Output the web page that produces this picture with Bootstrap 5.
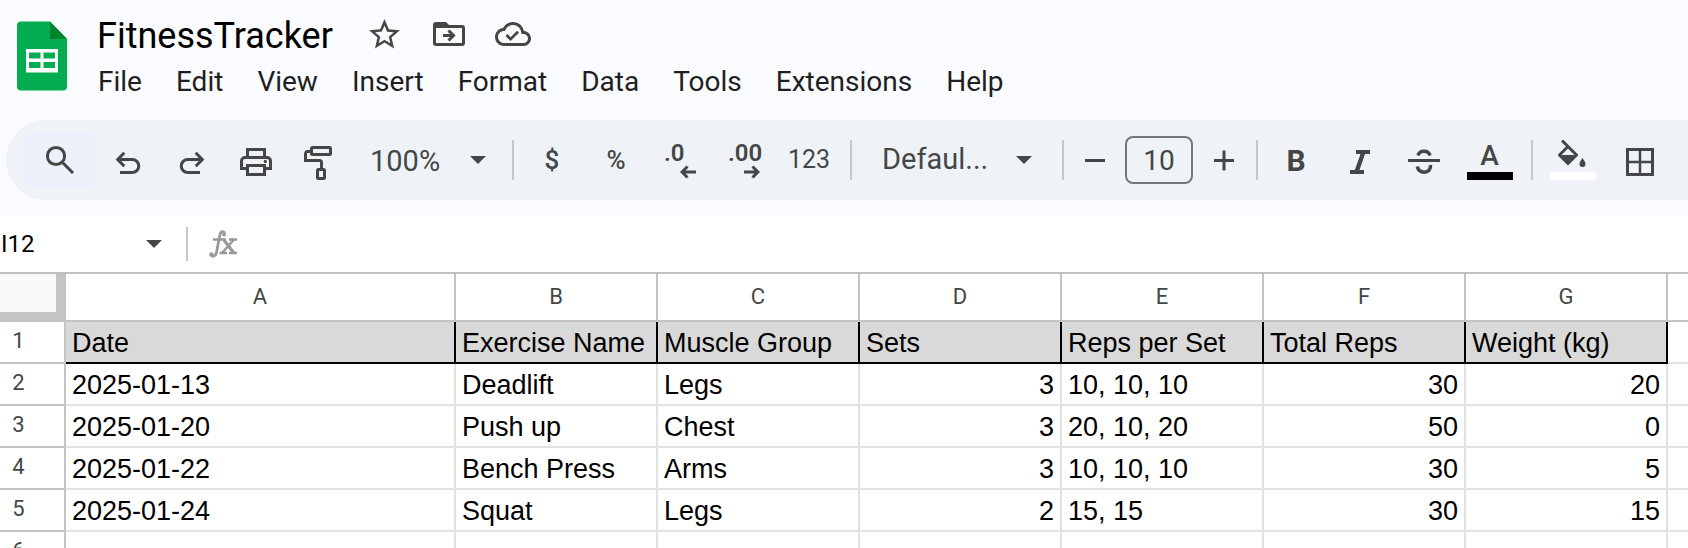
<!DOCTYPE html>
<html lang="en">
<head>
<meta charset="utf-8">
<meta name="viewport" content="width=device-width, initial-scale=1">
<title>FitnessTracker</title>
<link href="https://cdn.jsdelivr.net/npm/bootstrap@5.3.0/dist/css/bootstrap.min.css" rel="stylesheet">
<style>
  :root { --ink: #444746; --line: #c4c4c4; --cell-line: #e1e1e1; }
  body { background: #fafbfe; font-family: Roboto, "Liberation Sans", sans-serif; color: #1f1f1f; }
  button { border: 0; background: transparent; padding: 0; color: var(--ink); }
  svg { display: block; flex: none; }
  .ln { fill: none; stroke: currentColor; stroke-width: 3; }

  .app-head { height: 120px; padding: 12px 0 0 17px; gap: 30px; }
  .logo { margin-top: 9px; }
  .doc-row { height: 46px; }
  .doc-name { font-size: 36px; line-height: 44px; color: #000; margin: 0 20px 0 0; padding-top: 2px; font-weight: 400; }
  .doc-row button { width: 64px; height: 44px; }
  .menus { gap: 34px; padding: 5px 0 0 1px; }
  .menus a { font-size: 28px; line-height: 38px; color: #1f1f1f; text-decoration: none; }

  .toolbar { height: 80px; margin-left: 6px; padding-left: 18px; background: #eff3f8; border-radius: 40px 0 0 40px; overflow: hidden; }
  .tool { width: 64px; height: 56px; flex: none; display: flex; align-items: center; justify-content: center; font-size: 26px; line-height: 32px; }
  .tool.search { width: 72px; background: #edf0fa; border-radius: 8px; }
  .tool.wide { width: 67px; }
  .tool.step { width: 49px; }
  .tool.fmt { width: 66px; font-size: 25px; }
  .tool.strong { font-size: 30px; font-weight: 700; padding-top: 2px; }
  .rule { width: 2px; height: 40px; margin: 0 6px 0 8px; background: #c7c7c7; flex: none; }
  .pick { appearance: none; border: 0; border-radius: 0; height: 56px; flex: none; padding: 0 0 0 18px; font-size: 29px; color: var(--ink);
    background: transparent url("data:image/svg+xml,%3Csvg xmlns='http://www.w3.org/2000/svg' viewBox='0 0 16 8'%3E%3Cpath fill='%23444746' d='M0 0h16L8 8z'/%3E%3C/svg%3E") no-repeat right 18px center / 16px 8px; }
  .pick.zoom { width: 152px; padding-top: 3px; }
  .pick.font { width: 196px; padding-left: 24px; background-position: right 22px center; }
  .size { width: 68px; height: 48px; margin: 0 6px; border: 2px solid #747775; border-radius: 8px; background: transparent; text-align: center; font-size: 28px; color: var(--ink); padding: 0; flex: none; }
  .decimals { width: 32px; text-align: left; font-weight: 600; font-size: 24px; line-height: 24px; }
  .decimals svg { margin-left: auto; }
  .letter { font-size: 28px; line-height: 32px; font-weight: 500; }
  .swatch { width: 46px; height: 8px; background: #000; }

  .formula { height: 56px; margin-top: 16px; background: #fff; }
  .name-box { width: 130px; border: 0; padding: 0 0 0 1px; font-size: 24px; color: #000; background: transparent; }
  .formula button { width: 48px; height: 40px; }
  .formula .rule { height: 34px; }
  .fx { color: #999; margin-left: 15px; }
  .entry { border: 0; background: transparent; min-width: 0; font-size: 26px; }

  .sheet-wrap { background: #fff; overflow: hidden; min-height: 0; border-top: 2px solid #c0c0c0; }
  .sheet { width: 100%; table-layout: fixed; border-collapse: separate; border-spacing: 0; font-family: "Liberation Sans", Arial, sans-serif; font-size: 27px; line-height: 38px; color: #000; }
  .sheet .c-no { width: 66px; }
  .sheet .c-date { width: 390px; }
  .sheet .c-std { width: 202px; }
  .sheet th, .sheet td { height: 42px; padding: 2px 6px 0 6px; white-space: nowrap; border: 0 solid var(--cell-line); border-width: 0 2px 2px 0; font-weight: 400; text-align: left; vertical-align: middle; }
  .sheet .letters th { height: 48px; line-height: 46px; padding: 0; text-align: center; font-family: Roboto, sans-serif; font-size: 22px; color: var(--ink); border-color: var(--line); }
  .sheet .letters .corner { background: #f8f9fb; border-width: 0 10px 10px 0; }
  .sheet .no { padding: 0 27px 2px 0; line-height: 36px; text-align: center; font-family: Roboto, sans-serif; font-size: 22px; color: var(--ink); border-color: var(--line); }
  .sheet .titles td:not(:last-child) { background: #d9d9d9; border-color: #000; }
  .sheet tr > :last-child { border-right-width: 0; }
  .sheet .num { text-align: right; }
</style>
</head>
<body class="vh-100 overflow-hidden d-flex flex-column">

<header class="app-head d-flex align-items-start flex-shrink-0">
  <svg class="logo" width="50" height="70" viewBox="0 0 50 70" role="img" aria-label="Sheets">
    <path fill="#03ac4f" d="M4 0.500H33L50 18V65.500a4 4 0 0 1-4 4H4a4 4 0 0 1-4-4V4.500a4 4 0 0 1 4-4z"/>
    <path fill="#00832d" d="M33 .5L50 18H33z"/>
    <path fill="#fff" fill-rule="evenodd" d="M9 28h32v23.500H9zM12 31.500v6h11.500v-6zM26.500 31.500v6H38v-6zM12 41v6h11.500v-6zM26.500 41v6H38v-6z"/>
  </svg>
  <div>
    <div class="doc-row d-flex align-items-start">
      <h1 class="doc-name">FitnessTracker</h1>
      <button type="button" class="d-flex align-items-center justify-content-center" aria-label="Star">
        <svg width="37" height="37" viewBox="0 0 24 24" fill="currentColor"><path d="M22 9.240l-7.190-.62L12 2 9.190 8.630 2 9.240l5.460 4.730L5.820 21 12 17.270 18.180 21l-1.630-7.030L22 9.240zM12 15.400l-3.760 2.270 1-4.280-3.320-2.880 4.380-.38L12 6.100l1.710 4.040 4.380.38-3.320 2.880 1 4.280L12 15.400z"/></svg>
      </button>
      <button type="button" class="d-flex align-items-center justify-content-center" aria-label="Move">
        <svg width="32" height="26" viewBox="0 0 32 26"><path fill="currentColor" fill-rule="evenodd" d="M3 1h10l3 3h13a3 3 0 0 1 3 3v15a3 3 0 0 1-3 3H3a3 3 0 0 1-3-3V4a3 3 0 0 1 3-3zM3 7v15h26V7z"/><path class="ln" d="M10 14.500h10M15.500 9.500l5 5-5 5"/></svg>
      </button>
      <button type="button" class="d-flex align-items-center justify-content-center" aria-label="Saved to cloud">
        <svg width="36" height="36" viewBox="0 0 24 24" fill="currentColor"><path d="M19.350 10.040C18.670 6.590 15.640 4 12 4 9.110 4 6.600 5.640 5.350 8.040 2.340 8.360 0 10.910 0 14c0 3.310 2.690 6 6 6h13c2.760 0 5-2.240 5-5 0-2.640-2.050-4.780-4.650-4.960zM19 18H6c-2.210 0-4-1.790-4-4 0-2.050 1.530-3.760 3.560-3.970l1.070-.11.5-.95C8.080 7.140 9.940 6 12 6c2.620 0 4.880 1.860 5.390 4.430l.3 1.500 1.530.11c1.560.1 2.780 1.410 2.780 2.960 0 1.650-1.350 3-3 3zm-8.600-3.900l-2.100-2.100-1.300 1.300 3.400 3.400 5.600-5.600-1.300-1.300z"/></svg>
      </button>
    </div>
    <nav class="menus d-flex" aria-label="Menu">
      <a href="#">File</a><a href="#">Edit</a><a href="#">View</a><a href="#">Insert</a><a href="#">Format</a><a href="#">Data</a><a href="#">Tools</a><a href="#">Extensions</a><a href="#">Help</a>
    </nav>
  </div>
</header>

<div class="toolbar d-flex align-items-center flex-shrink-0" role="toolbar" aria-label="Formatting">
  <button type="button" class="tool search" aria-label="Search"><svg width="40" height="40" viewBox="0 0 40 40"><g class="ln"><circle cx="16" cy="16" r="8.600"/><path d="M22 22l11 11"/></g></svg></button>
  <button type="button" class="tool" aria-label="Undo"><svg width="40" height="40" viewBox="0 0 40 40"><path class="ln" d="M16.300 12.800l-6.600 6.700 6.600 6.700M12 32.600H24.200a6.500 6.500 0 0 0 0-13.100H10"/></svg></button>
  <button type="button" class="tool" aria-label="Redo"><svg width="40" height="40" viewBox="0 0 40 40"><path class="ln" d="M23.700 12.800l6.600 6.700-6.600 6.700M28 32.600H15.800a6.500 6.500 0 0 1 0-13.100H30"/></svg></button>
  <button type="button" class="tool" aria-label="Print"><svg width="40" height="40" viewBox="0 0 40 40"><path class="ln" d="M11.500 17V9.500h17V17M11 28.500H5.500V21a3.500 3.500 0 0 1 3.500-3.500h22a3.500 3.500 0 0 1 3.500 3.500v7.500H29M11.500 25.500h17v9h-17z"/><circle cx="29.300" cy="21.400" r="1.600" fill="currentColor"/></svg></button>
  <button type="button" class="tool" aria-label="Paint format"><svg width="40" height="40" viewBox="0 0 40 40"><g class="ln"><rect x="11.500" y="7.500" width="19" height="7" rx="1"/><path d="M11 11.500H8a2.500 2.500 0 0 0-2.500 2.500v6.500H19.500a2 2 0 0 1 2 2V29"/><rect x="17.500" y="29.500" width="7" height="9" rx="1"/></g></svg></button>
  <select class="pick zoom" aria-label="Zoom"><option>100%</option></select>
  <span class="rule"></span>
  <button type="button" class="tool fw-medium">$</button>
  <button type="button" class="tool fw-medium">%</button>
  <button type="button" class="tool" aria-label="Decrease decimal places"><span class="decimals">.0<svg width="16" height="14" viewBox="0 0 16 14"><path class="ln" d="M16 7H2M7.500 1.500L2 7l5.500 5.500"/></svg></span></button>
  <button type="button" class="tool" aria-label="Increase decimal places"><span class="decimals">.00<svg width="16" height="14" viewBox="0 0 16 14"><path class="ln" d="M0 7h14M8.500 1.500L14 7l-5.500 5.500"/></svg></span></button>
  <button type="button" class="tool fmt">123</button>
  <span class="rule"></span>
  <select class="pick font" aria-label="Font"><option>Defaul...</option></select>
  <span class="rule"></span>
  <button type="button" class="tool step" aria-label="Decrease font size"><svg width="40" height="40" viewBox="0 0 40 40"><path class="ln" d="M10 20.500h20"/></svg></button>
  <input class="size" type="text" value="10" aria-label="Font size">
  <button type="button" class="tool step" aria-label="Increase font size"><svg width="40" height="40" viewBox="0 0 40 40"><path class="ln" d="M10 20.500h20M20 10.500v20"/></svg></button>
  <span class="rule"></span>
  <button type="button" class="tool strong">B</button>
  <button type="button" class="tool" aria-label="Italic"><svg width="40" height="40" viewBox="0 0 40 40"><path fill="currentColor" d="M16 10h14v4h-5l-5.500 16H24v4H10v-4h4.800L20.500 14H16z"/></svg></button>
  <button type="button" class="tool" aria-label="Strikethrough"><svg width="40" height="40" viewBox="0 0 40 40"><g class="ln"><path d="M4 20.500h32"/><path d="M14 15.500c.7-2.800 3-4.300 6-4.300s5.300 1.500 6 4.300M13.300 26.500c.8 3.500 3.200 5.700 6.900 5.700 4 0 6.800-2.700 6.300-7.200" stroke-width="3.500"/></g></svg></button>
  <button type="button" class="tool wide" aria-label="Text color"><span class="d-flex flex-column align-items-center"><span class="letter">A</span><span class="swatch"></span></span></button>
  <span class="rule"></span>
  <button type="button" class="tool wide" aria-label="Fill color"><svg width="46" height="40" viewBox="0 0 46 40"><path class="ln" stroke-linejoin="round" stroke-width="2.500" d="M12 .5L26.500 15 18 23.500 9.500 15l8.500-8.500"/><path fill="currentColor" d="M8.500 15h19L18 25zM32.500 18c2 3 3 4.500 3 6a3 3 0 0 1-6 0c0-1.500 1-3 3-6z"/><path fill="#fff" d="M0 32h46v8H0z"/></svg></button>
  <button type="button" class="tool wide" aria-label="Borders"><svg width="40" height="40" viewBox="0 0 40 40"><g class="ln"><path d="M7.500 9.500h25v25h-25z"/><path stroke-width="2.500" d="M20 9v26M7 22h26"/></g></svg></button>
</div>

<div class="formula d-flex align-items-center flex-shrink-0">
  <input class="name-box" type="text" value="I12" aria-label="Cell">
  <button type="button" class="d-flex align-items-center justify-content-center" aria-label="Named ranges"><svg width="16" height="8" viewBox="0 0 16 8"><path fill="currentColor" d="M0 0h16L8 8z"/></svg></button>
  <span class="rule"></span>
  <svg class="fx" width="28" height="28" viewBox="0 0 28 28" aria-hidden="true"><g class="ln"><path stroke-width="2.800" d="M15.500 4.500C15.200.5 11.800.8 11 4.500L7.500 22.500C6.700 27 2.500 27.500 1.800 24"/><path stroke-width="2.500" d="M4 9.500h13M20 9.500h8M10.500 23h7.500M20 23h8"/><path stroke-width="3.200" d="M14.500 9.500L25 23"/><path stroke-width="2.500" d="M25 9.500L13 23"/></g><circle cx="15" cy="4.500" r="2" fill="currentColor"/><circle cx="2.500" cy="24.500" r="2.200" fill="currentColor"/></svg>
  <input class="entry flex-grow-1" type="text" aria-label="Formula">
</div>

<main class="sheet-wrap flex-grow-1">
  <table class="sheet">
    <colgroup><col class="c-no"><col class="c-date"><col class="c-std" span="6"><col></colgroup>
    <thead>
      <tr class="letters"><th class="corner"></th><th scope="col">A</th><th scope="col">B</th><th scope="col">C</th><th scope="col">D</th><th scope="col">E</th><th scope="col">F</th><th scope="col">G</th><th></th></tr>
    </thead>
    <tbody>
      <tr class="titles"><th class="no" scope="row">1</th><td>Date</td><td>Exercise Name</td><td>Muscle Group</td><td>Sets</td><td>Reps per Set</td><td>Total Reps</td><td>Weight (kg)</td><td></td></tr>
      <tr><th class="no" scope="row">2</th><td>2025-01-13</td><td>Deadlift</td><td>Legs</td><td class="num">3</td><td>10, 10, 10</td><td class="num">30</td><td class="num">20</td><td></td></tr>
      <tr><th class="no" scope="row">3</th><td>2025-01-20</td><td>Push up</td><td>Chest</td><td class="num">3</td><td>20, 10, 20</td><td class="num">50</td><td class="num">0</td><td></td></tr>
      <tr><th class="no" scope="row">4</th><td>2025-01-22</td><td>Bench Press</td><td>Arms</td><td class="num">3</td><td>10, 10, 10</td><td class="num">30</td><td class="num">5</td><td></td></tr>
      <tr><th class="no" scope="row">5</th><td>2025-01-24</td><td>Squat</td><td>Legs</td><td class="num">2</td><td>15, 15</td><td class="num">30</td><td class="num">15</td><td></td></tr>
      <tr><th class="no" scope="row">6</th><td></td><td></td><td></td><td></td><td></td><td></td><td></td><td></td></tr>
    </tbody>
  </table>
</main>

<script src="https://cdn.jsdelivr.net/npm/bootstrap@5.3.0/dist/js/bootstrap.bundle.min.js"></script>
</body>
</html>
